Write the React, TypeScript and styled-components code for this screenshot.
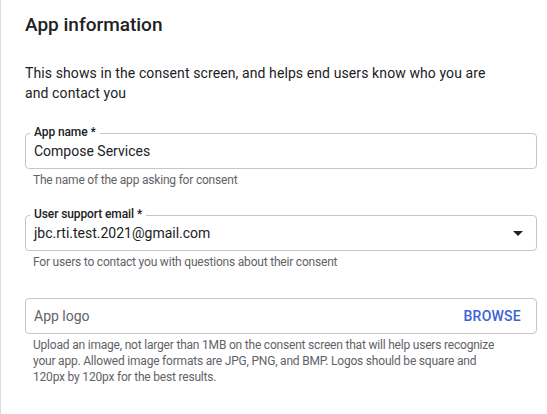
import React from "react";
import styled, { createGlobalStyle } from "styled-components";

const GlobalStyle = createGlobalStyle`
  html, body { margin: 0; padding: 0; background: #ffffff; }
  body { font-family: Roboto, "Noto Sans", Arial, sans-serif; color: #202124; }
`;

const Page = styled.div`
  border-left: 1px solid #dadce0;
  min-height: 414px;
  box-sizing: border-box;
  padding: 11px 10px 0 24px;
  display: flex;
  flex-direction: column;
`;

const Title = styled.h2`
  margin: 0;
  font-size: 19px;
  line-height: 28px;
  font-weight: 500;
  color: #202124;
`;

const Intro = styled.p`
  margin: 24px 0 0;
  padding-right: 30px;
  font-size: 14px;
  line-height: 20px;
  letter-spacing: 0.1px;
  color: #202124;
`;

const Field = styled.div<{ $top: number }>`
  margin-top: ${(p) => p.$top}px;
  display: flex;
  flex-direction: column;
`;

const Box = styled.div`
  position: relative;
  height: 36px;
  box-sizing: border-box;
  border: 1px solid #c6c6c6;
  border-radius: 4px;
  padding: 0 12px 0 8px;
  display: flex;
  align-items: center;
  justify-content: space-between;
`;

const Label = styled.span`
  position: absolute;
  left: 4px;
  top: -10px;
  padding: 0 4px;
  background: #ffffff;
  font-size: 12px;
  line-height: 16px;
  font-weight: 500;
  letter-spacing: -0.1px;
  color: #202124;
`;

const Value = styled.span<{ $muted?: boolean }>`
  font-size: 14px;
  line-height: 20px;
  color: ${(p) => (p.$muted ? "#5f6368" : "#202124")};
`;

const Arrow = styled.span`
  width: 0;
  height: 0;
  border-left: 5px solid transparent;
  border-right: 5px solid transparent;
  border-top: 5px solid #202124;
  margin-right: 1px;
`;

const Browse = styled.span`
  font-size: 14px;
  line-height: 20px;
  font-weight: 500;
  letter-spacing: 0.25px;
  color: #3b62d6;
  margin-right: 3px;
`;

const Helper = styled.div`
  margin-top: 3px;
  padding: 0 32px 0 8px;
  font-size: 12px;
  line-height: 16px;
  letter-spacing: -0.2px;
  color: #5f6368;
`;

export default function App() {
  return (
    <>
      <GlobalStyle />
      <Page>
        <Title>App information</Title>
        <Intro>
          This shows in the consent screen, and helps end users know who you are
          and contact you
        </Intro>

        <Field $top={30}>
          <Box>
            <Label>App name *</Label>
            <Value>Compose Services</Value>
          </Box>
          <Helper>The name of the app asking for consent</Helper>
        </Field>

        <Field $top={27}>
          <Box>
            <Label>User support email *</Label>
            <Value>jbc.rti.test.2021@gmail.com</Value>
            <Arrow />
          </Box>
          <Helper>For users to contact you with questions about their consent</Helper>
        </Field>

        <Field $top={28}>
          <Box>
            <Value $muted>App logo</Value>
            <Browse>BROWSE</Browse>
          </Box>
          <Helper>
            Upload an image, not larger than 1MB on the consent screen that will help users recognize
            your app. Allowed image formats are JPG, PNG, and BMP. Logos should be square and
            120px by 120px for the best results.
          </Helper>
        </Field>
      </Page>
    </>
  );
}
